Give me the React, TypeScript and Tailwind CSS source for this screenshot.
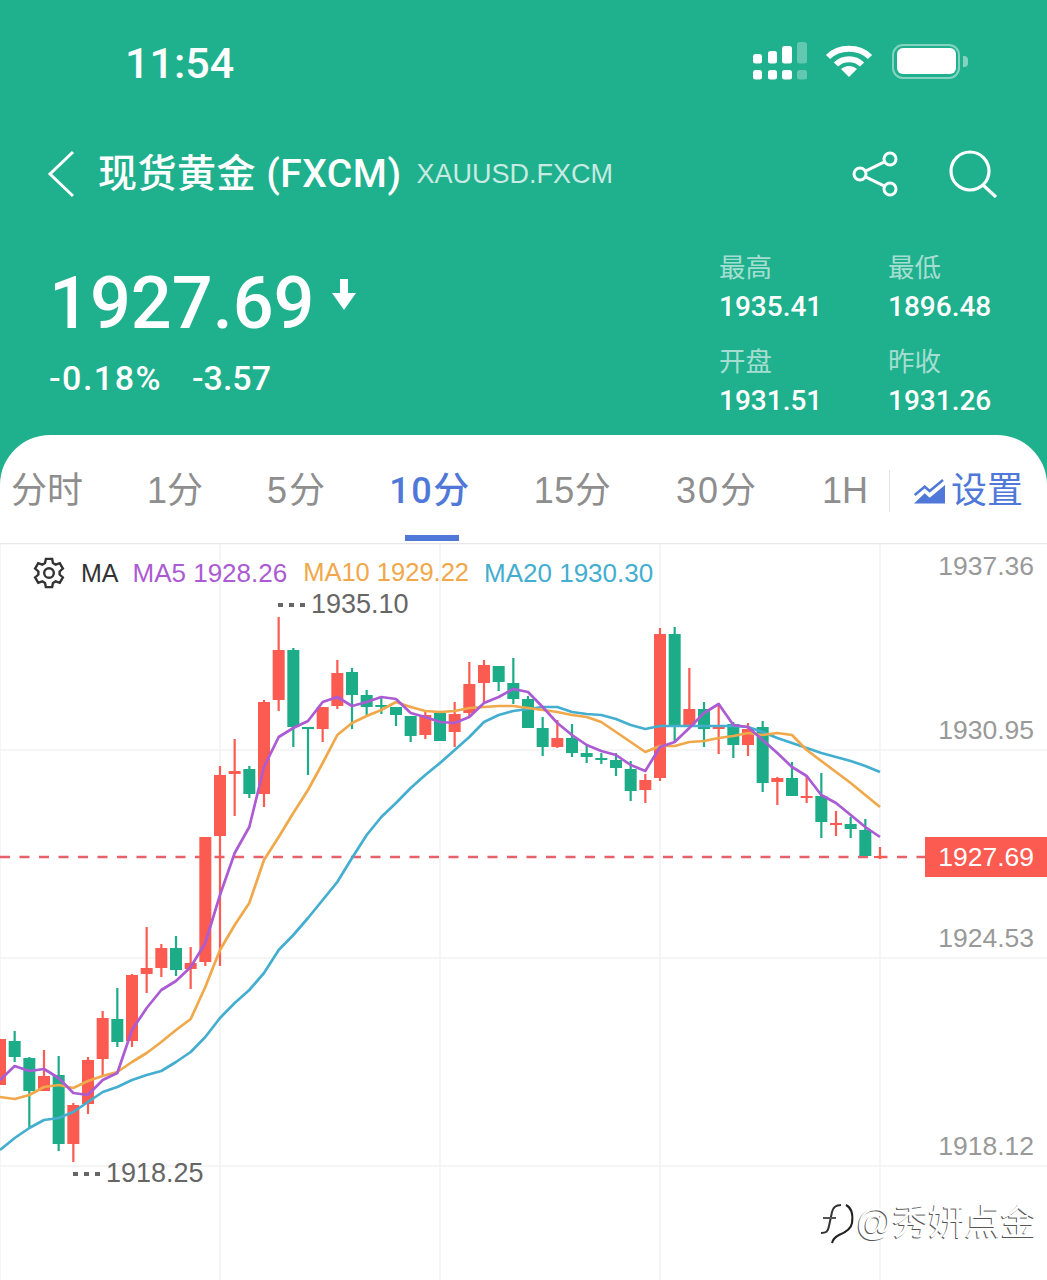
// Gold quote screen with a 10 minute candle chart
import React from 'react';

const sansFont = "font-['Liberation_Sans','Noto_Sans_CJK_SC',sans-serif]";
const mediumFont = "font-['Roboto','Noto_Sans_CJK_SC',sans-serif] font-medium";

const STEP = 880 / 60;

// [index, red?, bodyTop, bodyBottom, wickTop, wickBottom]
const candles: [number, boolean, number, number, number, number][] = [
  [0, true, 1039, 1085, 1039, 1085],
  [1, false, 1041, 1057, 1031, 1062],
  [2, false, 1058, 1091, 1057, 1127],
  [3, true, 1076, 1091, 1050, 1091],
  [4, false, 1075, 1144, 1056, 1151],
  [5, true, 1105, 1144, 1103, 1162],
  [6, true, 1060, 1104, 1057, 1114],
  [7, true, 1018, 1059, 1011, 1075],
  [8, false, 1019, 1042, 988, 1047],
  [9, true, 975, 1041, 974, 1047],
  [10, true, 968, 974, 927, 993],
  [11, true, 948, 968, 944, 977],
  [12, false, 948, 970, 936, 976],
  [13, true, 963, 969, 947, 989],
  [14, true, 837, 962, 837, 966],
  [15, true, 775, 836, 766, 966],
  [16, true, 771, 774, 739, 816],
  [17, false, 769, 794, 766, 798],
  [18, true, 702, 794, 700, 807],
  [19, true, 650, 700, 617, 711],
  [20, false, 650, 727, 648, 747],
  [21, false, 727, 729, 727, 775],
  [22, true, 707, 729, 707, 742],
  [23, true, 673, 706, 660, 709],
  [24, false, 672, 695, 668, 729],
  [25, false, 695, 707, 690, 717],
  [26, false, 705, 706, 698, 714],
  [27, false, 707, 715, 707, 726],
  [28, false, 716, 736, 716, 742],
  [29, true, 715, 735, 710, 739],
  [30, false, 713, 741, 713, 741],
  [31, true, 714, 732, 702, 747],
  [32, true, 684, 713, 662, 717],
  [33, true, 665, 683, 660, 703],
  [34, false, 666, 682, 666, 691],
  [35, false, 683, 699, 658, 704],
  [36, false, 699, 728, 696, 728],
  [37, false, 728, 747, 717, 756],
  [38, true, 738, 747, 720, 748],
  [39, false, 738, 753, 724, 757],
  [40, false, 753, 757, 745, 763],
  [41, false, 758, 760, 753, 764],
  [42, false, 760, 768, 753, 776],
  [43, false, 769, 791, 761, 801],
  [44, true, 780, 790, 774, 803],
  [45, true, 634, 778, 628, 781],
  [46, false, 634, 725, 627, 743],
  [47, true, 709, 725, 668, 725],
  [48, false, 709, 729, 702, 747],
  [49, true, 727, 729, 703, 754],
  [50, false, 724, 745, 722, 758],
  [51, true, 729, 745, 723, 756],
  [52, false, 727, 783, 721, 792],
  [53, true, 778, 782, 777, 805],
  [54, false, 778, 796, 762, 796],
  [55, true, 796, 797, 776, 803],
  [56, false, 796, 822, 773, 838],
  [57, true, 823, 824, 811, 836],
  [58, false, 824, 829, 817, 838],
  [59, false, 830, 856, 819, 856],
  [60, true, 856, 857, 847, 859],
];

const ma5 = [
  1080, 1066, 1071, 1069, 1078, 1093, 1095, 1080, 1073, 1030, 1008, 990, 981, 967, 943, 895, 853, 827, 767, 737, 728,
  721, 702, 697, 706, 702, 697, 699, 713, 717, 722, 723, 717, 703, 697, 689, 692, 707, 723, 735, 745, 751, 755, 765,
  771, 747, 742, 728, 713, 704, 725, 727, 740, 753, 767, 776, 795, 803, 815, 827, 837,
];
const ma10 = [
  1097, 1099, 1095, 1087, 1085, 1088, 1081, 1076, 1072, 1062, 1053, 1042, 1030, 1019, 987, 950, 925, 903, 860, 837,
  813, 790, 763, 735, 723, 716, 710, 702, 707, 711, 712, 711, 708, 707, 706, 706, 708, 710, 712, 715, 717, 722, 732,
  742, 752, 746, 746, 742, 741, 738, 736, 733, 735, 733, 735, 750, 761, 772, 783, 795, 807,
];
const ma20 = [
  1150, 1138, 1128, 1120, 1118, 1112, 1102, 1092, 1087, 1080, 1075, 1071, 1062, 1052, 1037, 1018, 1003, 990, 973, 950,
  935, 918, 900, 882, 858, 835, 817, 803, 788, 775, 763, 750, 737, 722, 715, 711, 709, 707, 707, 712, 714, 715, 719,
  725, 729, 726, 726, 726, 726, 726, 726, 727, 732, 738, 743, 748, 753, 757, 761, 766, 772,
];

const toPoints = (values: number[]) => values.map((y, i) => `${(i * STEP).toFixed(1)},${y}`).join(' ');

const tabs = [
  { label: '分时', className: 'ml-[11px] w-[72px]' },
  { label: '1分', className: 'ml-[64px] w-[56px]' },
  { label: '5分', className: 'ml-[64px] w-[60px] tracking-[2px]' },
  { label: '10分', className: 'ml-[63px] w-[80px] tracking-[1.5px]', active: true },
  { label: '15分', className: 'ml-[64px] w-[77px] tracking-[0.5px]' },
  { label: '30分', className: 'ml-[65px] w-[82px] tracking-[2px]' },
  { label: '1H', className: 'ml-[66px] w-[42px]' },
];

const StatusIcons: React.FC = () => (
  <div className="flex items-center mb-[5px]">
    <svg width="54" height="38" viewBox="0 0 54 38" className="fill-white">
      <rect x="0" y="12" width="9" height="9.5" rx="2.5" />
      <rect x="0" y="28" width="9" height="9.5" rx="2.5" />
      <rect x="15" y="9" width="9" height="12.5" rx="2.5" />
      <rect x="15" y="28" width="9" height="9.5" rx="2.5" />
      <rect x="29" y="4" width="10" height="17.5" rx="2.5" />
      <rect x="29" y="28" width="10" height="9.5" rx="2.5" />
      <rect x="44" y="0" width="10" height="21.5" rx="2.5" opacity="0.3" />
      <rect x="44" y="28" width="10" height="9.5" rx="2.5" opacity="0.3" />
    </svg>
    <svg width="48" height="34" viewBox="0 0 48 34" className="ml-[18px] fill-none stroke-white">
      <path d="M3 13 C14 2 34 2 45 13" strokeWidth="6" />
      <path d="M11 20.5 C18 13.5 30 13.5 37 20.5" strokeWidth="6" />
      <path d="M24 33 L16 25 C21 21 27 21 32 25 Z" className="fill-white" strokeWidth="0" />
    </svg>
    <div className="ml-[19px] flex items-center">
      <div className="w-[68px] h-[35px] rounded-[11px] border-[2.5px] border-white/45 p-[2.5px]">
        <div className="w-full h-full rounded-[6px] bg-white" />
      </div>
      <div className="ml-[3px] w-[5px] h-[11px] rounded-r-[4px] bg-white/45" />
    </div>
  </div>
);

const NavBar: React.FC = () => (
  <div className="mt-[64px] h-[50px] flex items-center pl-[47px] pr-[50px]">
    <svg width="28" height="48" viewBox="0 0 28 48" className="fill-none stroke-white">
      <path d="M26 2 L3 24 L26 46" strokeWidth="3" />
    </svg>
    <span className={`ml-[23px] text-[39px] leading-none tracking-[0.5px] whitespace-nowrap text-white ${mediumFont}`}>现货黄金 (FXCM)</span>
    <span className={`ml-[15px] text-[27px] leading-none text-white/75 ${sansFont}`}>XAUUSD.FXCM</span>
    <svg width="48" height="48" viewBox="0 0 48 48" className="ml-auto fill-none stroke-white">
      <circle cx="38" cy="9" r="6" strokeWidth="3" />
      <circle cx="8" cy="24" r="6" strokeWidth="3" />
      <circle cx="38" cy="39" r="6" strokeWidth="3" />
      <path d="M32.5 11.8 L13.5 21.2 M13.5 26.8 L32.5 36.2" strokeWidth="3" />
    </svg>
    <svg width="48" height="48" viewBox="0 0 48 48" className="ml-[49px] fill-none stroke-white">
      <circle cx="21" cy="21" r="19" strokeWidth="3.2" />
      <path d="M34 35 L47 47" strokeWidth="3.2" />
    </svg>
  </div>
);

const Stat: React.FC<{ label: string; value: string }> = ({ label, value }) => (
  <div>
    <div className={`h-[28px] text-[26.5px] leading-[28px] text-white/60 ${sansFont}`}>{label}</div>
    <div className={`mt-[11px] h-[28px] text-[28px] leading-[28px] text-white ${mediumFont}`}>{value}</div>
  </div>
);

const Quote: React.FC = () => (
  <div className="mt-[55px] flex pl-[49px]">
    <div className="pt-[6px]">
      <div className="flex items-start">
        <span className={`mt-[8px] text-[72px] leading-[72px] text-white ${mediumFont}`}>1927.69</span>
        <svg width="26" height="32" viewBox="0 0 26 32" className="ml-[16px] mt-[19px] fill-white">
          <path d="M9 0 H17 V14 H25 L13 31 L1 14 H9 Z" />
        </svg>
      </div>
      <div className={`mt-[18px] flex text-[34px] leading-[40px] text-white ${mediumFont}`}>
        <span className="w-[143px] tracking-[1.5px]">-0.18%</span>
        <span>-3.57</span>
      </div>
    </div>
    <div className="ml-auto w-[328px] grid grid-cols-[169px_159px] gap-y-[27px]">
      <Stat label="最高" value="1935.41" />
      <Stat label="最低" value="1896.48" />
      <Stat label="开盘" value="1931.51" />
      <Stat label="昨收" value="1931.26" />
    </div>
  </div>
);

const TabBar: React.FC = () => (
  <div className={`h-[108px] flex items-start pt-[35px] ${sansFont}`}>
    {tabs.map(tab => (
      <div key={tab.label} className={`shrink-0 flex flex-col items-center whitespace-nowrap ${tab.className}`}>
        <span className={tab.active ? `text-[36px] leading-[42px] text-[#4f78d8] ${mediumFont}` : 'text-[36px] leading-[42px] text-[#8e8e8e]'}>
          {tab.label}
        </span>
        {tab.active && <div className="mt-[23px] ml-[4px] w-[54px] h-[6px] bg-[#4f78d8]" />}
      </div>
    ))}
    <div className="ml-[23px] shrink-0 flex items-center h-[42px]">
      <div className="w-[1px] h-[42px] bg-[#e3e3e3]" />
      <svg width="32" height="25" viewBox="0 0 32 25" className="ml-[24px] fill-[#4f78d8]">
        <path d="M0 24.5 L10.7 14.3 L15.7 18.7 L31 6 V24.5 Z" />
        <path d="M0.7 16 L10.7 7.7 L15.7 12 L29 1" fill="none" stroke="#4f78d8" strokeWidth="2.5" />
      </svg>
      <span className="ml-[5px] text-[36px] leading-[42px] text-[#4f78d8]">设置</span>
    </div>
  </div>
);

const CandleChart: React.FC = () => (
  <svg viewBox="0 543 1047 737" className="absolute inset-0 w-full h-full">
    <g stroke="#f2f2f2" strokeWidth="1.5">
      {[750, 958, 1166].map(y => <line key={y} x1="0" x2="1047" y1={y} y2={y} />)}
      {[0, 220, 440, 660, 880].map(x => <line key={x} x1={x} x2={x} y1="543" y2="1280" />)}
      <line x1="0" x2="1047" y1="543.5" y2="543.5" stroke="#e6e6e6" />
    </g>
    <line x1="0" x2="925" y1="857" y2="857" stroke="#e8606a" strokeWidth="2.4" strokeDasharray="10 9.5" />
    {candles.map(([i, red, top, bottom, wickTop, wickBottom]) => {
      const x = i * STEP;
      const color = red ? '#fb5b50' : '#1cac88';
      return (
        <g key={i} fill={color}>
          <rect x={x - 1.1} y={wickTop} width="2.2" height={wickBottom - wickTop} />
          <rect x={x - 6} y={top} width="12" height={Math.max(bottom - top, 2)} />
        </g>
      );
    })}
    <polyline points={toPoints(ma20)} fill="none" stroke="#43aed0" strokeWidth="2.7" strokeLinejoin="round" />
    <polyline points={toPoints(ma10)} fill="none" stroke="#f0a84a" strokeWidth="2.7" strokeLinejoin="round" />
    <polyline points={toPoints(ma5)} fill="none" stroke="#ab5bd3" strokeWidth="2.7" strokeLinejoin="round" />
  </svg>
);

const MaLegend: React.FC = () => (
  <div className="absolute left-[32px] top-[11px] h-[38px] flex items-center leading-none whitespace-nowrap">
    <svg width="34" height="36" viewBox="0 0 24 24" className="fill-none stroke-[#333]" strokeWidth="1.7">
      <path d="M9.8 2 h4.4 l.6 3 1.9 1.1 2.9-1 2.2 3.8-2.3 2 v2.2 l2.3 2-2.2 3.8-2.9-1-1.9 1.1-.6 3 h-4.4 l-.6-3-1.9-1.1-2.9 1-2.2-3.8 2.3-2 v-2.2 l-2.3-2 2.2-3.8 2.9 1 1.9-1.1 z" />
      <circle cx="12" cy="12" r="3.4" />
    </svg>
    <span className="ml-[15px] text-[25px] text-[#333]">MA</span>
    <span className="ml-[14px] text-[26px] text-[#ab5bd3]">MA5 1928.26</span>
    <span className="ml-[16px] text-[25.5px] text-[#f0a84a]">MA10 1929.22</span>
    <span className="ml-[15px] text-[26px] text-[#43aed0]">MA20 1930.30</span>
  </div>
);

const PriceNote: React.FC<{ value: string; className: string }> = ({ value, className }) => (
  <div className={`absolute flex items-center text-[27px] leading-none text-[#666] ${className}`}>
    <span className="flex gap-[6px]">
      <i className="w-[5px] h-[4px] bg-[#666]" />
      <i className="w-[5px] h-[4px] bg-[#666]" />
      <i className="w-[5px] h-[4px] bg-[#666]" />
    </span>
    <span className="ml-[6px]">{value}</span>
  </div>
);

const AxisLabel: React.FC<{ value: string; className: string }> = ({ value, className }) => (
  <div className={`absolute right-[13px] text-[26.5px] leading-none text-[#999] ${className}`}>{value}</div>
);

const Watermark: React.FC = () => (
  <div className="absolute left-[820px] top-[659px] flex items-center">
    <svg width="36" height="42" viewBox="0 0 36 42" className="fill-none">
      <path d="M1 31 C6 31 8 30 9 24 L12 10 C13 5 16 3 21 3" stroke="#333" strokeWidth="2" />
      <path d="M3 16 H15 M14 16 h2" stroke="#555" strokeWidth="2" />
      <path d="M26 3 C32 6 33 14 32 21 C31 28 24 31 19 33 C15 35 13 37 12 41" stroke="#222" strokeWidth="2" />
    </svg>
    <span className={`text-[36px] leading-none text-white [text-shadow:-1px_1px_0_#555] ${sansFont}`}>@秀妍点金</span>
  </div>
);

const ChartPanel: React.FC = () => (
  <div className={`relative h-[737px] ${sansFont}`}>
    <CandleChart />
    <MaLegend />
    <PriceNote value="1935.10" className="left-[278px] top-[48px]" />
    <PriceNote value="1918.25" className="left-[73px] top-[617px]" />
    <AxisLabel value="1937.36" className="top-[10px]" />
    <AxisLabel value="1930.95" className="top-[174px]" />
    <AxisLabel value="1924.53" className="top-[382px]" />
    <AxisLabel value="1918.12" className="top-[590px]" />
    <div className="absolute right-0 top-[294px] w-[122px] h-[40px] bg-[#fb5b50] flex items-center justify-end pr-[13px] text-[26.5px] leading-none text-white">
      1927.69
    </div>
    <Watermark />
  </div>
);

export default function App() {
  return (
    <div className="w-[1047px] h-[1280px] overflow-hidden bg-[#1fb08d]">
      <div className="h-[435px]">
        <div className="h-[85px] flex items-end justify-between pl-[125px] pr-[79px]">
          <span className={`text-[43px] leading-[43px] text-white ${mediumFont}`}>11:54</span>
          <StatusIcons />
        </div>
        <NavBar />
        <Quote />
      </div>
      <div className="rounded-t-[50px] bg-white h-[845px] overflow-hidden">
        <TabBar />
        <ChartPanel />
      </div>
    </div>
  );
}
